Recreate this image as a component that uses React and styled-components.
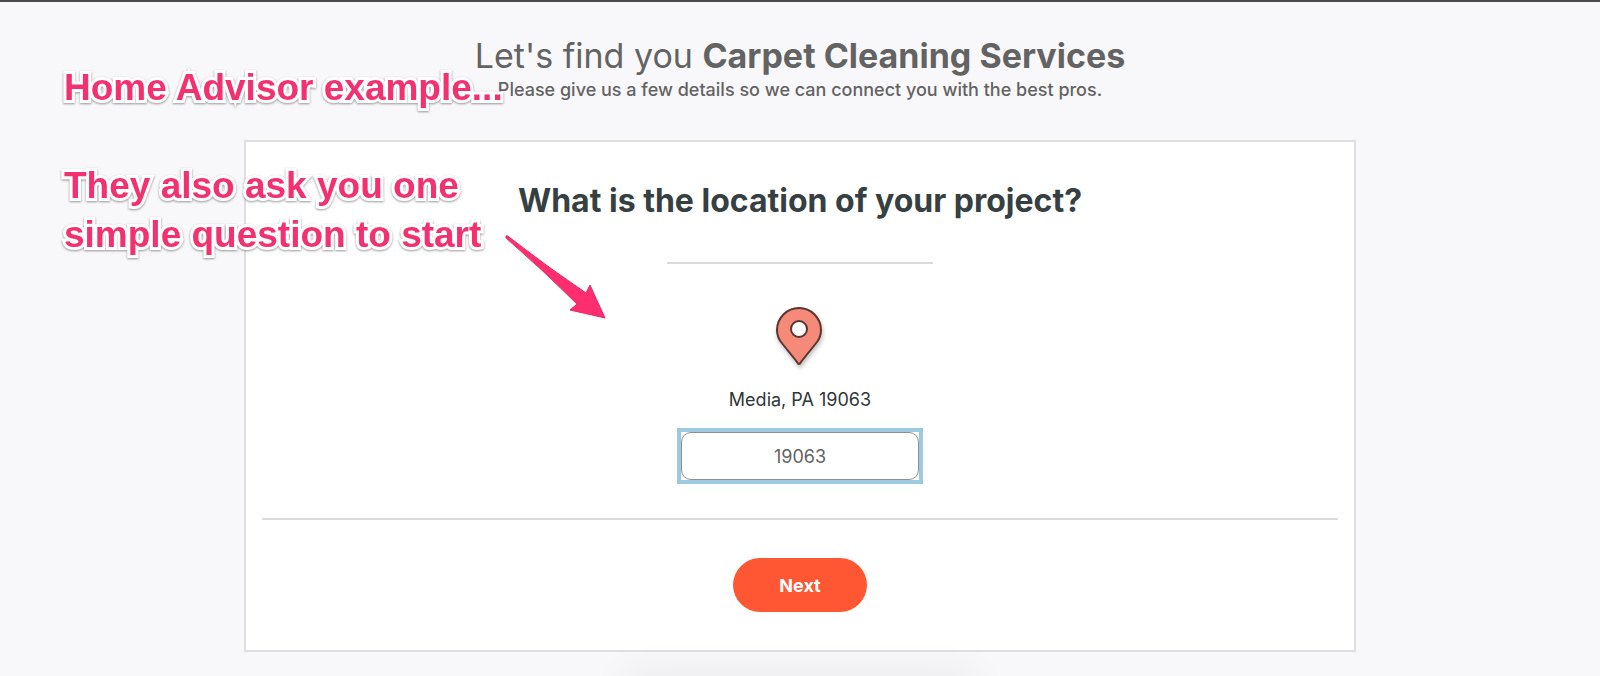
import React, { useState } from "react";
import styled, { createGlobalStyle } from "styled-components";

const GlobalStyle = createGlobalStyle`
  *, *::before, *::after { box-sizing: border-box; }
  body {
    margin: 0;
    background: #f8f8fa;
    color: #2f3639;
    font-family: Inter, "Liberation Sans", sans-serif;
    overflow-x: hidden;
  }
`;

const Page = styled.div`
  position: relative;
  display: flex;
  flex-direction: column;
  align-items: center;
  min-height: 100vh;
  overflow: hidden;
  border-top: 2px solid #4a4a4c;
`;

const Header = styled.header`
  padding: 32px 16px 38px;
  text-align: center;
  color: #636363;
`;

const Title = styled.h1`
  margin: 0;
  font-size: 34px;
  line-height: 44px;
  font-weight: 400;

  strong { font-weight: 700; }
`;

const Subtitle = styled.p`
  margin: 0;
  font-size: 18px;
  line-height: 24px;
  font-weight: 500;
`;

const Card = styled.form`
  display: flex;
  flex-direction: column;
  align-items: center;
  width: min(1112px, 100% - 32px);
  padding: 36px 16px 38px;
  background: #fff;
  border: 2px solid #dfdfe0;
`;

const Question = styled.h2`
  margin: 0 0 38px;
  font-size: 32px;
  line-height: 46px;
  font-weight: 700;
  text-align: center;
  color: #363f42;
`;

const Divider = styled.hr`
  width: ${({ $width }) => $width};
  height: 2px;
  margin: 0;
  border: 0;
  background: #dcdcdc;
`;

const Location = styled.div`
  display: flex;
  flex-direction: column;
  align-items: center;
  padding: 40px 0 34px;
`;

const PinIcon = styled.svg`
  display: block;
  width: 60px;
  height: 70px;
`;

const ZipLabel = styled.label`
  margin: 12px 0 14px;
  font-size: 18px;
  line-height: 28px;
`;

const ZipFrame = styled.div`
  display: flex;
  padding: 4px;
  background: #fff;
  box-shadow: inset 0 0 0 4px #9ecae1;
`;

const ZipInput = styled.input`
  width: 238px;
  height: 48px;
  padding: 0 16px;
  border: 1px solid #8f8f8f;
  border-radius: 10px;
  background: #fff;
  outline: none;
  color: #636363;
  font: inherit;
  font-size: 18px;
  text-align: center;
`;

const NextButton = styled.button`
  width: 134px;
  height: 54px;
  margin-top: 38px;
  border: 0;
  border-radius: 27px;
  background: #ff5733;
  color: #fff;
  font: inherit;
  font-size: 18px;
  font-weight: 700;
  cursor: pointer;
`;

const BottomBar = styled.footer`
  width: 340px;
  height: 8px;
  margin-top: auto;
  margin-bottom: -16px;
  box-shadow: 0 0 40px 4px rgba(0, 0, 0, 0.12);
`;

const Notes = styled.aside`
  position: absolute;
  top: 61px;
  left: 64px;
  color: #f4316f;
  font-family: "Liberation Sans", sans-serif;
  font-size: 37px;
  font-weight: 700;
  line-height: 49px;
  white-space: nowrap;
  -webkit-text-stroke: 6px #fff;
  paint-order: stroke fill;
  stroke-linejoin: round;
  filter: drop-shadow(0 1px 1px rgba(0, 0, 0, 0.4));
  pointer-events: none;

  p { margin: 0 0 49px; }
`;

const Arrow = styled.svg`
  position: absolute;
  top: 231px;
  left: 504px;
  width: 104px;
  height: 90px;
  pointer-events: none;
`;

export default function App() {
  const [zip, setZip] = useState("19063");

  return (
    <>
      <GlobalStyle />
      <Page>
        <Header>
          <Title>
            Let's find you <strong>Carpet Cleaning Services</strong>
          </Title>
          <Subtitle>
            Please give us a few details so we can connect you with the best pros.
          </Subtitle>
        </Header>

        <Card onSubmit={(e) => e.preventDefault()}>
          <Question>What is the location of your project?</Question>
          <Divider $width="266px" />
          <Location>
            <PinIcon viewBox="0 0 60 70" aria-hidden="true">
              <defs>
                <filter id="pin-shadow" x="-30%" y="-30%" width="160%" height="160%">
                  <feDropShadow dx="1" dy="3" stdDeviation="2" floodOpacity="0.25" />
                </filter>
              </defs>
              <path
                d="M29 60 Q28 60 27 58 L11 38 C8 34 7 30 7 26 A22 22 0 0 1 51 26 C51 30 50 34 47 38 L31 58 Q30 60 29 60 Z"
                fill="#f58a79"
                stroke="#5a3532"
                strokeWidth="2"
                filter="url(#pin-shadow)"
              />
              <circle cx="29" cy="25" r="8" fill="#fff" stroke="#5a3532" strokeWidth="2" />
            </PinIcon>
            <ZipLabel htmlFor="zip">Media, PA 19063</ZipLabel>
            <ZipFrame>
              <ZipInput
                id="zip"
                inputMode="numeric"
                value={zip}
                onChange={(e) => setZip(e.target.value)}
              />
            </ZipFrame>
          </Location>
          <Divider $width="100%" />
          <NextButton type="submit">Next</NextButton>
        </Card>

        <BottomBar />

        <Notes>
          <p>Home Advisor example...</p>
          <p>
            They also ask you one
            <br />
            simple question to start
          </p>
        </Notes>
        <Arrow viewBox="0 0 104 90" aria-hidden="true">
          <path
            d="M2 3 Q3 2 5 4 Q42 33 82 60 L86 52 L101 85 L66 77 L73 71 Q39 37 2 5 Z"
            fill="#fc2e70"
            stroke="#e52b64"
            strokeWidth="1"
            strokeLinejoin="round"
          />
        </Arrow>
      </Page>
    </>
  );
}
